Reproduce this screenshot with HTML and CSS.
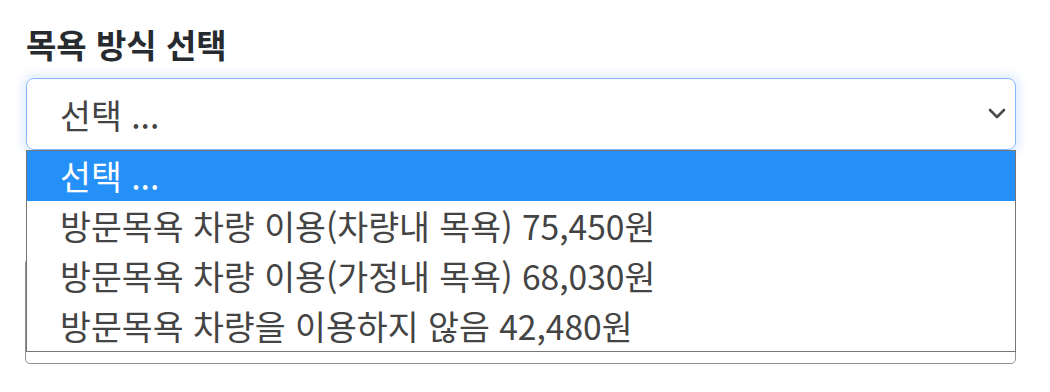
FILE: index.html
```html
<!DOCTYPE html>
<html lang="ko">

<head>
    <meta charset="UTF-8">
    <meta name="viewport" content="width=device-width, initial-scale=1.0">
    <title>목욕 방식 선택</title>
    <link rel="stylesheet" href="styles.css">
</head>

<body>
    <div class="container">
        <h2 class="label">목욕 방식 선택</h2>
        <div class="select-wrap">
            <div class="select-box">
                <span>선택 ...</span>
                <svg class="chevron" width="18" height="12" viewBox="0 0 18 12">
                    <path d="M2 2 L9 9 L16 2" fill="none" stroke="#4a4a4a" stroke-width="2.6" stroke-linecap="round" stroke-linejoin="round"/>
                </svg>
            </div>
            <ul class="options">
                <li class="active">선택 ...</li>
                <li>방문목욕 차량 이용(차량내 목욕) 75,450원</li>
                <li>방문목욕 차량 이용(가정내 목욕) 68,030원</li>
                <li>방문목욕 차량을 이용하지 않음 42,480원</li>
            </ul>
        </div>
        <div class="next-box"></div>
    </div>
</body>
</html>
```

FILE: styles.css
```css
body {
    margin: 0;
    background-color: #ffffff;
    font-family: "Noto Sans CJK KR", "Noto Sans", sans-serif;
    color: #212529;
}

.container {
    padding: 24px 34px 0 26px;
}

.label {
    margin: 0 0 14px 0;
    font-size: 33px;
    font-weight: 700;
    line-height: 40px;
    color: #272b30;
}

.select-wrap {
    position: relative;
}

.select-box {
    display: flex;
    align-items: center;
    justify-content: space-between;
    height: 70px;
    padding: 0 9px 0 33px;
    border: 1px solid #86b7fe;
    border-radius: 8px;
    box-shadow: 0 0 10px 4px rgba(13, 110, 253, 0.12);
    font-size: 33.6px;
    color: #444444;
}

.options {
    position: absolute;
    top: 72px;
    left: 0;
    right: 0;
    margin: 0;
    padding: 0;
    list-style: none;
    background-color: #ffffff;
    border: 1px solid #767676;
    z-index: 2;
}

.options li {
    height: 50px;
    line-height: 50px;
    padding-left: 33px;
    font-size: 33.6px;
    color: #444444;
}

.options li.active {
    background-color: #2490f8;
    color: #ffffff;
}

.next-box {
    margin-top: 108px;
    height: 104px;
    margin-left: -1px;
    border: 1px solid #8f8f8f;
    border-radius: 5px;
}
```
